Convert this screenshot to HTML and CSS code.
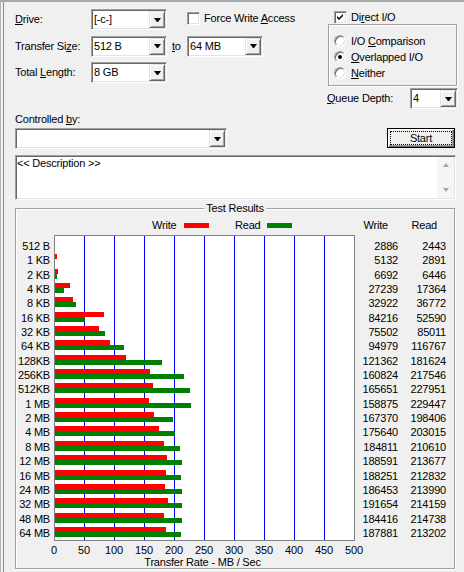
FILE: index.html
```html
<!DOCTYPE html>
<html>
<head>
<meta charset="utf-8">
<link rel="stylesheet" href="styles.css">
</head>
<body>
<div class="win">
  <div class="top">
    <div class="params">
      <div class="lbl"><u>D</u>rive:</div>
      <div class="field"><span class="val">[-c-]</span><span class="drop"></span></div>
      <div></div>
      <div class="check force"><span class="cb"></span><span>Force Write <u>A</u>ccess</span></div>

      <div class="lbl">Transfer Si<u>z</u>e:</div>
      <div class="field"><span class="val">512 B</span><span class="drop"></span></div>
      <div class="lbl to"><u>t</u>o</div>
      <div class="field"><span class="val">64 MB</span><span class="drop"></span></div>

      <div class="lbl">Total <u>L</u>ength:</div>
      <div class="field"><span class="val">8 GB</span><span class="drop"></span></div>
    </div>
    <div class="opts">
      <div class="check direct"><span class="cb"><svg width="11" height="11" viewBox="0 0 11 11"><path d="M2 4 L4 6 L8 2 L8 4 L4 8 L2 6 Z" fill="#000"/></svg></span><span>Di<u>r</u>ect I/O</span></div>
      <div class="radios">
        <div class="radio"><span class="rb"></span><span>I/O <u>C</u>omparison</span></div>
        <div class="radio"><span class="rb on"></span><span><u>O</u>verlapped I/O</span></div>
        <div class="radio"><span class="rb"></span><span><u>N</u>either</span></div>
      </div>
      <div class="queue">
        <div class="lbl"><u>Q</u>ueue Depth:</div>
        <div class="field"><span class="val">4</span><span class="drop"></span></div>
      </div>
    </div>
  </div>

  <div class="ctrl">
    <div class="ctrl-left">
      <div class="lbl">Controlled <u>b</u>y:</div>
      <div class="field"><span class="val"></span><span class="drop"></span></div>
    </div>
    <div class="start"><span>Start</span></div>
  </div>

  <div class="desc">
    <div class="txt">&lt;&lt; Description &gt;&gt;</div>
    <div class="sb"><span class="up"></span><span class="dn"></span></div>
  </div>

  <div class="group">
    <div class="gtitle">Test Results</div>
    <div class="legend">
      <div class="sp"></div>
      <div class="lg"><span class="name">Write</span><span class="swatch red"></span><span class="name name2">Read</span><span class="swatch green"></span></div>
      <div class="hw">Write</div>
      <div class="hr">Read</div>
    </div>
    <div class="chartrow">
      <div class="labels">
        <div>512 B</div><div>1 KB</div><div>2 KB</div><div>4 KB</div><div>8 KB</div><div>16 KB</div><div>32 KB</div><div>64 KB</div><div>128KB</div><div>256KB</div><div>512KB</div><div>1 MB</div><div>2 MB</div><div>4 MB</div><div>8 MB</div><div>12 MB</div><div>16 MB</div><div>24 MB</div><div>32 MB</div><div>48 MB</div><div>64 MB</div>
      </div>
      <div class="chart">
        <div class="row"><i class="w" style="width:0px"></i><i class="r" style="width:0px"></i></div>
        <div class="row"><i class="w" style="width:2px"></i><i class="r" style="width:0px"></i></div>
        <div class="row"><i class="w" style="width:3px"></i><i class="r" style="width:2px"></i></div>
        <div class="row"><i class="w" style="width:15px"></i><i class="r" style="width:9px"></i></div>
        <div class="row"><i class="w" style="width:18px"></i><i class="r" style="width:21px"></i></div>
        <div class="row"><i class="w" style="width:49px"></i><i class="r" style="width:30px"></i></div>
        <div class="row"><i class="w" style="width:44px"></i><i class="r" style="width:50px"></i></div>
        <div class="row"><i class="w" style="width:55px"></i><i class="r" style="width:69px"></i></div>
        <div class="row"><i class="w" style="width:71px"></i><i class="r" style="width:107px"></i></div>
        <div class="row"><i class="w" style="width:95px"></i><i class="r" style="width:129px"></i></div>
        <div class="row"><i class="w" style="width:98px"></i><i class="r" style="width:135px"></i></div>
        <div class="row"><i class="w" style="width:94px"></i><i class="r" style="width:136px"></i></div>
        <div class="row"><i class="w" style="width:99px"></i><i class="r" style="width:118px"></i></div>
        <div class="row"><i class="w" style="width:104px"></i><i class="r" style="width:120px"></i></div>
        <div class="row"><i class="w" style="width:109px"></i><i class="r" style="width:125px"></i></div>
        <div class="row"><i class="w" style="width:112px"></i><i class="r" style="width:127px"></i></div>
        <div class="row"><i class="w" style="width:111px"></i><i class="r" style="width:126px"></i></div>
        <div class="row"><i class="w" style="width:110px"></i><i class="r" style="width:127px"></i></div>
        <div class="row"><i class="w" style="width:113px"></i><i class="r" style="width:127px"></i></div>
        <div class="row"><i class="w" style="width:109px"></i><i class="r" style="width:127px"></i></div>
        <div class="row"><i class="w" style="width:111px"></i><i class="r" style="width:126px"></i></div>
      </div>
      <div class="vals vw">
        <div>2886</div><div>5132</div><div>6692</div><div>27239</div><div>32922</div><div>84216</div><div>75502</div><div>94979</div><div>121362</div><div>160824</div><div>165651</div><div>158875</div><div>167370</div><div>175640</div><div>184811</div><div>188591</div><div>188251</div><div>186453</div><div>191654</div><div>184416</div><div>187881</div>
      </div>
      <div class="vals vr">
        <div>2443</div><div>2891</div><div>6446</div><div>17364</div><div>36772</div><div>52590</div><div>85011</div><div>116767</div><div>181624</div><div>217546</div><div>227951</div><div>229447</div><div>198406</div><div>203015</div><div>210610</div><div>213677</div><div>212832</div><div>213990</div><div>214159</div><div>214738</div><div>213202</div>
      </div>
    </div>
    <div class="axis">
      <span>0</span><span>50</span><span>100</span><span>150</span><span>200</span><span>250</span><span>300</span><span>350</span><span>400</span><span>450</span><span>500</span>
    </div>
    <div class="xtitle">Transfer Rate - MB / Sec</div>
  </div>
</div>
</body>
</html>
```
FILE: styles.css
```css
* { box-sizing: border-box; }
body {
  margin: 0;
  background: #f0f0f0;
  font-family: "Liberation Sans", Arial, sans-serif;
  font-size: 11px;
  letter-spacing: -0.2px;
  color: #000;
}
u { text-decoration: underline; text-underline-offset: 1px; }
.win {
  width: 464px;
  height: 572px;
  border-top: 2px solid #a8a8a8;
  border-left: 1px solid #b4b4b4;
  box-shadow: inset 2px 0 0 #f0f0f0, inset 3px 0 0 #8c8c8c;
  overflow: hidden;
}
.top { display: flex; padding: 7px 0 0 14px; }
.params {
  display: grid;
  grid-template-columns: 76px 76px 20px 76px;
  grid-template-rows: 21px 21px 21px;
  row-gap: 5.5px;
}
.lbl { align-self: center; line-height: 13px; white-space: nowrap; }
.to { padding-left: 5px; }
.field {
  display: flex;
  align-items: center;
  height: 21px;
  background: #fff;
  border: 1px solid;
  border-color: #a0a0a0 #fff #fff #a0a0a0;
  box-shadow: inset 1px 1px 0 #696969, inset -1px -1px 0 #e3e3e3;
  padding: 1px;
}
.field .val { flex: 1; padding-left: 1px; line-height: 13px; white-space: nowrap; }
.drop {
  flex: none;
  width: 16px;
  height: 17px;
  background: #f0f0f0;
  border: 1px solid;
  border-color: #e3e3e3 #696969 #696969 #e3e3e3;
  box-shadow: inset 1px 1px 0 #fff, inset -1px -1px 0 #a0a0a0;
  display: flex;
  align-items: center;
  justify-content: center;
}
.drop::after {
  content: "";
  width: 1px;
  height: 0;
  border-top: 4px solid #000;
  border-left: 3px solid transparent;
  border-right: 3px solid transparent;
}
.check { display: flex; align-items: center; gap: 4px; white-space: nowrap; line-height: 13px; }
.force { align-self: start; margin-top: 2.5px; }
.cb {
  flex: none;
  width: 13px;
  height: 13px;
  background: #fff;
  border: 1px solid;
  border-color: #a0a0a0 #fff #fff #a0a0a0;
  box-shadow: inset 1px 1px 0 #696969, inset -1px -1px 0 #e3e3e3;
}
.cb svg { display: block; }
.opts { margin-left: 64px; width: 131px; }
.direct { margin: 2px 0 0 7px; height: 13px; }
.radios {
  margin-left: 1px;
  width: 129px;
  height: 62px;
  border: 1px solid #a0a0a0;
  box-shadow: inset 1px 1px 0 #fff, 1px 1px 0 #fff;
  padding: 8px 0 0 5px;
}
.radio { display: flex; align-items: center; gap: 5px; height: 16px; line-height: 13px; white-space: nowrap; }
.rb {
  flex: none;
  width: 12px;
  height: 12px;
  border-radius: 50%;
  background: #fff;
  border: 1px solid;
  border-color: #a0a0a0 #fff #fff #a0a0a0;
  box-shadow: inset 1px 1px 0 #696969, inset -1px -1px 0 #e3e3e3;
}
.rb.on::after {
  content: "";
  display: block;
  width: 4px;
  height: 4px;
  margin: 3px;
  border-radius: 50%;
  background: #000;
}
.queue { display: flex; align-items: center; margin-top: 2px; height: 21px; }
.queue .lbl { width: 83px; }
.queue .field { width: 48px; }

.ctrl { display: flex; margin: 3px 9px 0 14px; }
.ctrl-left { width: 212px; }
.ctrl-left .lbl { display: block; line-height: 14px; }
.ctrl-left .field { margin-top: 2px; }
.start {
  margin-left: auto;
  align-self: flex-end;
  margin-bottom: 1px;
  width: 68px;
  height: 20px;
  border: 1px solid #000;
  background: #f0f0f0;
  box-shadow: inset 1px 1px 0 #fff, inset -1px -1px 0 #696969, inset -2px -2px 0 #a0a0a0;
  padding: 2px;
}
.start span {
  display: flex;
  height: 100%;
  align-items: center;
  justify-content: center;
  border: 1px dotted #000;
  line-height: 12px;
}

.desc {
  display: flex;
  margin: 6px 8px 0 14px;
  height: 45px;
  background: #fff;
  border: 1px solid;
  border-color: #a0a0a0 #fff #fff #a0a0a0;
  box-shadow: inset 1px 1px 0 #696969, inset -1px -1px 0 #e3e3e3;
  padding: 1px;
}
.desc .txt { flex: 1; line-height: 13px; }
.sb {
  flex: none;
  width: 17px;
  background: #f5f5f5;
  display: flex;
  flex-direction: column;
  justify-content: space-between;
  align-items: center;
  padding: 6px 0;
}
.sb .up, .sb .dn {
  width: 1px;
  height: 0;
  border-left: 3px solid transparent;
  border-right: 3px solid transparent;
}
.sb .up { border-bottom: 4px solid #a8a8a8; }
.sb .dn { border-top: 4px solid #a8a8a8; }

.group {
  position: relative;
  margin: 8px 9px 0 14px;
  height: 361px;
  border: 1px solid #a0a0a0;
  box-shadow: inset 1px 1px 0 #fff, 1px 1px 0 #fff;
}
.gtitle {
  position: absolute;
  top: -7px;
  left: 50%;
  transform: translateX(-50%);
  background: #f0f0f0;
  padding: 0 2px;
  line-height: 12px;
  white-space: nowrap;
}
.legend { display: flex; align-items: center; margin-top: 10px; height: 12px; line-height: 12px; }
.legend .sp { width: 38px; flex: none; }
.lg { width: 301px; flex: none; display: flex; align-items: center; padding-left: 98px; }
.lg .name { width: 32px; flex: none; }
.lg .name2 { margin-left: 26px; }
.swatch { width: 25px; height: 5px; flex: none; }
.swatch.red { background: #ff0000; }
.swatch.green { background: #008000; }
.hw { width: 43px; flex: none; text-align: right; padding-right: 10px; }
.hr { width: 48px; flex: none; text-align: right; padding-right: 9px; }

.chartrow { display: flex; margin-top: 4px; }
.labels { width: 34px; flex: none; margin-right: 4px; text-align: right; padding-top: 4px; }
.labels div, .vals div { height: 14.35px; line-height: 14.35px; white-space: nowrap; }
.vals { flex: none; text-align: right; padding-top: 4px; }
.vw { width: 43px; }
.vr { width: 48px; }
.chart {
  flex: none;
  width: 301px;
  height: 306px;
  border: 1px solid #808080;
  background-color: #fff;
  background-image: linear-gradient(to right, transparent 29px, #0000ff 29px, #0000ff 30px, transparent 30px);
  background-size: 30px 100%;
  background-repeat: repeat-x;
  padding-top: 4px;
}
.row { height: 14.35px; }
.row i { display: block; height: 5px; }
.row .w { background: #ff0000; }
.row .r { background: #008000; }
.axis { display: flex; margin: 3px 0 0 23px; line-height: 12px; }
.axis span { width: 30px; flex: none; text-align: center; }
.xtitle { margin-left: 38px; width: 297px; text-align: center; line-height: 12px; white-space: nowrap; }
```
